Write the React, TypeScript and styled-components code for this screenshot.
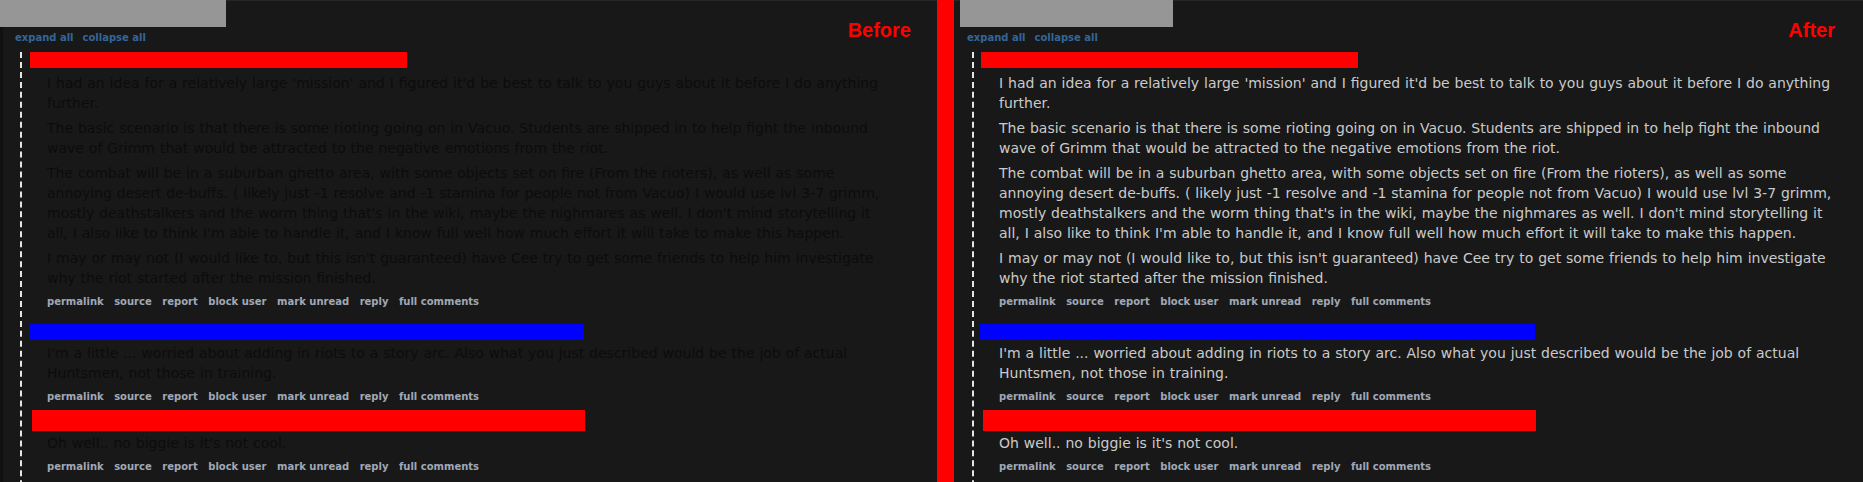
import styled, { createGlobalStyle } from "styled-components";

const GlobalStyle = createGlobalStyle`
  html, body {
    margin: 0;
    padding: 0;
    background: #181818;
    overflow: hidden;
  }
  body {
    font-family: "DejaVu Sans", Verdana, sans-serif;
  }
`;

const Page = styled.div`
  display: flex;
  width: 1863px;
  height: 482px;
  overflow: hidden;
`;

const Panel = styled.section<{ $width: number }>`
  position: relative;
  flex: 0 0 ${({ $width }) => $width}px;
  display: flex;
  flex-direction: column;
  background: linear-gradient(#262626, #262626) top / 100% 1px no-repeat,
    #181818;
`;

const Divider = styled.div`
  flex: 0 0 17px;
  background: #ff0000;
`;

const Masthead = styled.div<{ $inset: number; $width: number }>`
  margin-left: ${({ $inset }) => $inset}px;
  width: ${({ $width }) => $width}px;
  height: 27px;
  flex: 0 0 27px;
  background: #969696;
`;

const Label = styled.div<{ $right: number }>`
  position: absolute;
  top: 20px;
  right: ${({ $right }) => $right}px;
  font: bold 20px/20px "Liberation Sans", Arial, sans-serif;
  color: #ff0000;
`;

const Content = styled.div<{ $pad: number; $edge: boolean }>`
  flex: 1;
  padding-left: ${({ $pad }) => $pad}px;
  border-left: ${({ $edge }) => ($edge ? "3px solid #111111" : "none")};
`;

const ExpandRow = styled.div`
  display: flex;
  gap: 9px;
  margin-top: 4px;
  font: bold 10px/14px "DejaVu Sans", Verdana, sans-serif;
  color: #336699;
`;

const Thread = styled.div`
  margin: 7px 0 0 5px;
  padding-bottom: 60px;
  border-left: 2px dashed #e6e6e6;
`;

const CommentBar = styled.div<{
  $offset: number;
  $width: number;
  $height: number;
  $top: number;
  $color: string;
}>`
  margin: ${({ $top }) => $top}px 0 0 ${({ $offset }) => $offset}px;
  width: ${({ $width }) => $width}px;
  height: ${({ $height }) => $height}px;
  background: ${({ $color }) => $color};
`;

const Body = styled.div<{ $gap: number; $dim: boolean }>`
  margin-top: ${({ $gap }) => $gap}px;
  padding-left: 25px;
  max-width: 843px;
  font-size: 14px;
  line-height: 20px;
  word-spacing: 0.45px;
  color: ${({ $dim }) => ($dim ? "#0c0c0c" : "#cacaca")};

  p {
    margin: 0;
  }
  p + p {
    margin-top: 5px;
  }
`;

const LinkRow = styled.ul`
  display: flex;
  gap: 10.5px;
  margin: 5px 0 0;
  padding: 0 0 0 25px;
  list-style: none;
  font: bold 10px/18px "DejaVu Sans", Verdana, sans-serif;
  color: #a0a8b6;
`;

type CommentData = {
  color: string;
  offset: number;
  width: number;
  height: number;
  top: number;
  gap: number;
  paragraphs: string[];
};

const comments: CommentData[] = [
  {
    color: "#ff0000",
    offset: 8,
    width: 377,
    height: 16,
    top: 0,
    gap: 5,
    paragraphs: [
      "I had an idea for a relatively large 'mission' and I figured it'd be best to talk to you guys about it before I do anything further.",
      "The basic scenario is that there is some rioting going on in Vacuo. Students are shipped in to help fight the inbound wave of Grimm that would be attracted to the negative emotions from the riot.",
      "The combat will be in a suburban ghetto area, with some objects set on fire (From the rioters), as well as some annoying desert de-buffs. ( likely just -1 resolve and -1 stamina for people not from Vacuo) I would use lvl 3-7 grimm, mostly deathstalkers and the worm thing that's in the wiki, maybe the nighmares as well. I don't mind storytelling it all, I also like to think I'm able to handle it, and I know full well how much effort it will take to make this happen.",
      "I may or may not (I would like to, but this isn't guaranteed) have Cee try to get some friends to help him investigate why the riot started after the mission finished.",
    ],
  },
  {
    color: "#0000ff",
    offset: 7,
    width: 555,
    height: 16,
    top: 13,
    gap: 3,
    paragraphs: [
      "I'm a little ... worried about adding in riots to a story arc. Also what you just described would be the job of actual Huntsmen, not those in training.",
    ],
  },
  {
    color: "#ff0000",
    offset: 10,
    width: 553,
    height: 21,
    top: 4,
    gap: 2,
    paragraphs: ["Oh well.. no biggie is it's not cool."],
  },
];

const links = [
  "permalink",
  "source",
  "report",
  "block user",
  "mark unread",
  "reply",
  "full comments",
];

function Comment({
  data,
  shift,
  dim,
}: {
  data: CommentData;
  shift: number;
  dim: boolean;
}) {
  return (
    <article>
      <CommentBar
        $offset={data.offset - shift}
        $width={data.width}
        $height={data.height}
        $top={data.top}
        $color={data.color}
      />
      <Body $gap={data.gap} $dim={dim}>
        {data.paragraphs.map((text, i) => (
          <p key={i}>{text}</p>
        ))}
      </Body>
      <LinkRow>
        {links.map((l) => (
          <li key={l}>{l}</li>
        ))}
      </LinkRow>
    </article>
  );
}

function Screen({
  label,
  width,
  mastInset,
  mastWidth,
  labelRight,
  pad,
  edge,
  shift,
  dim,
}: {
  label: string;
  width: number;
  mastInset: number;
  mastWidth: number;
  labelRight: number;
  pad: number;
  edge: boolean;
  shift: number;
  dim: boolean;
}) {
  return (
    <Panel $width={width}>
      <Masthead $inset={mastInset} $width={mastWidth} />
      <Label $right={labelRight}>{label}</Label>
      <Content $pad={pad} $edge={edge}>
        <ExpandRow>
          <span>expand all</span>
          <span>collapse all</span>
        </ExpandRow>
        <Thread>
          {comments.map((c, i) => (
            <Comment key={i} data={c} shift={shift} dim={dim} />
          ))}
        </Thread>
      </Content>
    </Panel>
  );
}

export default function App() {
  return (
    <>
      <GlobalStyle />
      <Page>
        <Screen
          label="Before"
          width={937}
          mastInset={0}
          mastWidth={226}
          labelRight={26}
          pad={12}
          edge={true}
          shift={0}
          dim={true}
        />
        <Divider />
        <Screen
          label="After"
          width={909}
          mastInset={6}
          mastWidth={213}
          labelRight={28}
          pad={13}
          edge={false}
          shift={1}
          dim={false}
        />
      </Page>
    </>
  );
}
